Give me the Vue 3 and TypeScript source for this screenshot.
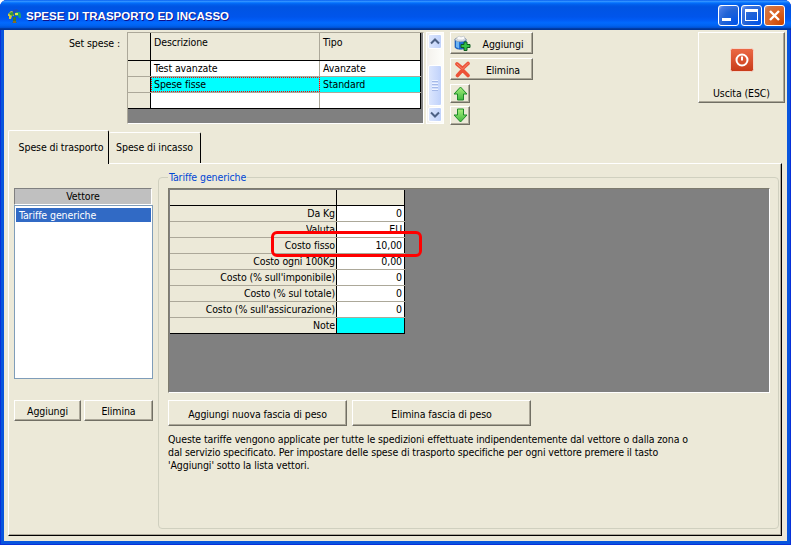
<script setup lang="ts">
interface FeeRow { label: string; value: string; clip?: boolean; note?: boolean }
const setRows = [
  { desc: 'Test avanzate', tipo: 'Avanzate', selected: false },
  { desc: 'Spese fisse', tipo: 'Standard', selected: true },
  { desc: '', tipo: '', selected: false },
]
const feeRows: FeeRow[] = [
  { label: 'Da Kg', value: '0' },
  { label: 'Valuta', value: 'EU', clip: true },
  { label: 'Costo fisso', value: '10,00' },
  { label: 'Costo ogni 100Kg', value: '0,00' },
  { label: "Costo (% sull'imponibile)", value: '0' },
  { label: 'Costo (% sul totale)', value: '0' },
  { label: "Costo (% sull'assicurazione)", value: '0' },
  { label: 'Note', value: '', note: true },
]
</script>

<template>
  <div class="window">
    <header class="titlebar">
      <svg class="app-icon" width="15" height="15" viewBox="0 0 15 15">
        <path d="M6 8 L9 8 L9 13 L10 14 L5 14 L6 13 Z" fill="#3d7a2a" />
        <path d="M6 12 L9 12 L9 14 L6 14 Z" fill="#8a6a28" />
        <path d="M1 5 L4 2 L7 3 L7 7 L5 7 L4 10 L2 10 L2 7 L1 7 Z" fill="#d8c83c" />
        <path d="M2 4 L5 3 L7 4 L6 7 L3 6 Z" fill="#2f9a3c" />
        <path d="M6 1 L10 0 L12 2 L9 3 L9 6 L7 7 L6 4 Z" fill="#1c50b8" />
        <path d="M9 3 L13 3 L14 6 L14 9 L12 9 L11 7 L8 7 Z" fill="#1fa070" />
        <path d="M8 4 L11 4 L11 6 L8 6 Z" fill="#e6e24a" />
      </svg>
      <span class="title">SPESE DI TRASPORTO ED INCASSO</span>
      <div class="controls">
        <button class="ctl"><i class="g-min"></i></button>
        <button class="ctl"><i class="g-max"></i></button>
        <button class="ctl close">
          <svg width="13" height="13" viewBox="0 0 13 13"><path d="M2 2 L11 11 M11 2 L2 11" stroke="#fff" stroke-width="2.4" /></svg>
        </button>
      </div>
    </header>

    <div class="client">
      <section class="top">
        <label class="set-label">Set spese :</label>
        <div class="set-grid">
          <div class="set-row head">
            <div class="c-fix"></div>
            <div class="c-desc">Descrizione</div>
            <div class="c-tipo">Tipo</div>
          </div>
          <div v-for="(r, i) in setRows" :key="i" class="set-row body" :class="{ sel: r.selected }">
            <div class="c-fix"></div>
            <div class="c-desc"><span>{{ r.desc }}</span></div>
            <div class="c-tipo">{{ r.tipo }}</div>
          </div>
        </div>

        <div class="scroll">
          <div class="sb-btn">
            <svg width="10" height="7" viewBox="0 0 10 7"><path d="M1 5.5 L5 1.5 L9 5.5" fill="none" stroke="#4d6185" stroke-width="2" /></svg>
          </div>
          <div class="sb-thumb"><i></i><i></i><i></i><i></i></div>
          <div class="sb-btn">
            <svg width="10" height="7" viewBox="0 0 10 7"><path d="M1 1.5 L5 5.5 L9 1.5" fill="none" stroke="#4d6185" stroke-width="2" /></svg>
          </div>
        </div>

        <div class="actions">
          <button class="btn icon-btn">
            <svg width="17" height="17" viewBox="0 0 17 17">
              <path d="M1 4 L1 12 C1 15 12 15 12 12 L12 4 Z" fill="#1f6fd6" stroke="#174a9a" stroke-width=".6" />
              <path d="M2 6 L2 12 L5 13.4 L5 6 Z" fill="#6db4f2" />
              <ellipse cx="6.5" cy="4.5" rx="5.5" ry="2.2" fill="#dfe4ea" stroke="#8c98a8" stroke-width=".7" />
              <path d="M2.5 3 L5 1 L7 2 L10 1 L11 3.5 L9 5 L4 5 Z" fill="#fafafa" stroke="#a6aeb8" stroke-width=".5" />
              <path d="M10 7 L13 7 L13 9.5 L16 9.5 L16 12.5 L13 12.5 L13 15.5 L10 15.5 L10 12.5 L7 12.5 L7 9.5 L10 9.5 Z" fill="#35c246" stroke="#0f5c22" stroke-width="1" />
            </svg>
            <span>Aggiungi</span>
          </button>
          <button class="btn icon-btn">
            <svg width="17" height="17" viewBox="0 0 17 17">
              <path d="M3 3 L8.5 7.5 L14 2.5 M3.5 14.5 L8.5 9 L14 14.5" fill="none" stroke="#ec5238" stroke-width="3.6" stroke-linecap="round" stroke-linejoin="round" />
              <path d="M3 3 L8.5 8 L14 2.5" fill="none" stroke="#f58a72" stroke-width="1" stroke-linecap="round" />
            </svg>
            <span>Elimina</span>
          </button>
          <button class="btn arrow">
            <svg width="15" height="15" viewBox="0 0 15 15">
              <defs><linearGradient id="gu" x1="0" y1="0" x2="0" y2="1"><stop offset="0" stop-color="#a8f07c" /><stop offset="1" stop-color="#3fb83f" /></linearGradient></defs>
              <path d="M7.5 1 L14 8 L10.5 8 L10.5 14 L4.5 14 L4.5 8 L1 8 Z" fill="url(#gu)" stroke="#1e8a2a" stroke-width="1" />
            </svg>
          </button>
          <button class="btn arrow">
            <svg width="15" height="15" viewBox="0 0 15 15">
              <defs><linearGradient id="gd" x1="0" y1="0" x2="0" y2="1"><stop offset="0" stop-color="#a8f07c" /><stop offset="1" stop-color="#3fb83f" /></linearGradient></defs>
              <path d="M4.5 1 L10.5 1 L10.5 7 L14 7 L7.5 14 L1 7 L4.5 7 Z" fill="url(#gd)" stroke="#1e8a2a" stroke-width="1" />
            </svg>
          </button>
        </div>

        <button class="btn exit">
          <svg width="24" height="24" viewBox="0 0 24 24">
            <defs><linearGradient id="ex" x1="0" y1="0" x2="0" y2="1"><stop offset="0" stop-color="#ec6a46" /><stop offset="1" stop-color="#c83a18" /></linearGradient></defs>
            <rect x=".5" y=".5" width="23" height="23" rx="2" fill="url(#ex)" stroke="#f4d8cc" />
            <circle cx="12" cy="12" r="5.5" fill="none" stroke="#fff" stroke-width="2" />
            <path d="M12 8.5 L12 12.5" stroke="#fff" stroke-width="2" />
          </svg>
          <span>Uscita (ESC)</span>
        </button>
      </section>

      <nav class="tabs">
        <div class="tab active">Spese di trasporto</div>
        <div class="tab">Spese di incasso</div>
      </nav>

      <section class="panel">
        <aside class="left">
          <div class="list-head">Vettore</div>
          <div class="list">
            <div class="list-item">Tariffe generiche</div>
          </div>
          <div class="left-btns">
            <button class="btn b-add">Aggiungi</button>
            <button class="btn b-del">Elimina</button>
          </div>
        </aside>

        <fieldset class="group">
          <legend>Tariffe generiche</legend>
          <div class="fee-grid">
            <div class="fee-table">
              <div class="fee-row head"><div class="f-l"></div><div class="f-v"></div></div>
              <div v-for="r in feeRows" :key="r.label" class="fee-row">
                <div class="f-l"><span :class="{ clip: r.clip }">{{ r.label }}</span></div>
                <div class="f-v" :class="{ note: r.note }"><span :class="{ clip: r.clip }">{{ r.value }}</span></div>
              </div>
            </div>
          </div>
          <div class="fee-btns">
            <button class="btn wide">Aggiungi nuova fascia di peso</button>
            <button class="btn wide">Elimina fascia di peso</button>
          </div>
          <p class="info">
            Queste tariffe vengono applicate per tutte le spedizioni effettuate indipendentemente dal vettore o dalla zona o<br />
            dal servizio specificato. Per impostare delle spese di trasporto specifiche per ogni vettore premere il tasto<br />
            'Aggiungi' sotto la lista vettori.
          </p>
        </fieldset>
      </section>
    </div>

    <div class="annotation"></div>
  </div>
</template>

<style scoped>
* { box-sizing: border-box; }
.window {
  position: relative;
  width: 791px;
  height: 545px;
  padding: 0 4px 4px;
  background: #0855dd;
  border-radius: 7px 7px 0 0;
  box-shadow: inset 1px 0 #0831d9, inset -1px 0 #0831d9, inset 0 -1px #0831d9;
  font: 10.5px "DejaVu Sans Condensed", "Liberation Sans", sans-serif;
  letter-spacing: -0.1px;
  color: #000;
  overflow: hidden;
}
.titlebar {
  display: flex;
  align-items: center;
  height: 30px;
  margin: 0 -4px;
  padding: 0 6px 0 7px;
  background: linear-gradient(180deg, #0058ee 0, #3593ff 4%, #288eff 6%, #127dff 8%, #036ffc 10%, #0262ee 14%, #0057e5 20%, #0054e3 24%, #0055eb 56%, #005bf5 66%, #026afe 76%, #0062ef 86%, #0052d6 92%, #0040ab 94%, #003092 100%);
}
.app-icon { margin-top: 2px; }
.title {
  margin-left: 4px;
  padding-top: 2px;
  color: #fff;
  font: bold 11.5px "Liberation Sans", sans-serif;
  letter-spacing: 0;
  text-shadow: 1px 1px #0f1089;
}
.controls { margin-left: auto; display: flex; gap: 2px; }
.ctl {
  width: 21px;
  height: 21px;
  padding: 0;
  display: flex;
  align-items: center;
  justify-content: center;
  border: 1px solid #fff;
  border-radius: 3px;
  background: radial-gradient(circle at 90% 90%, #0054e9 0%, #2263d5 55%, #4479e4 85%, #a3bbec 100%);
}
.ctl.close { background: radial-gradient(circle at 90% 90%, #cc4600 0%, #dc6527 55%, #cd7546 85%, #ffffff 130%); }
.g-min { width: 9px; height: 3px; background: #fff; margin: 9px 5px 0 0; }
.g-max { width: 13px; height: 12px; border: 1px solid #fff; border-top-width: 3px; }

.client {
  height: 511px;
  padding: 2px 2px 5px 0;
  background: #ece9d8;
}
.top { display: flex; height: 98px; }
.set-label { width: 123px; padding: 5px 7px 0 0; text-align: right; }
.set-grid {
  width: 297px;
  height: 92px;
  background: #808080;
  border: 1px solid;
  border-color: #aca899 #fff #fff #aca899;
}
.set-row { display: flex; width: 293px; background: #fff; border-bottom: 1px solid #000; }
.set-row.head { height: 28px; background: #ece9d8; padding: 0; }
.set-row.body { height: 16px; border-bottom: 1px solid #aca899; }
.set-row.body:nth-child(4) { height: 16px; border-bottom: 1px solid #000; }
.set-row.head > div { padding-top: 2px; }
.c-fix { width: 23px; flex: none; background: #ece9d8; border-right: 1px solid #000; }
.c-desc { width: 169px; flex: none; padding-left: 3px; border-right: 1px solid #aca899; line-height: 14px; }
.c-tipo { flex: 1; padding-left: 3px; line-height: 14px; border-right: 1px solid #000; }
.head .c-desc, .head .c-tipo { background: #ece9d8; }
.sel .c-desc { background: #0ff; outline: 1px dotted #f00; outline-offset: -1px; }
.sel .c-tipo { background: #0ff; }

.scroll {
  width: 18px;
  height: 92px;
  margin-left: 2px;
  padding: 2px;
  background: linear-gradient(90deg, #f3f1ec, #fefefb);
  box-shadow: inset 0 0 0 1px #fff;
  display: flex;
  flex-direction: column;
  justify-content: space-between;
  gap: 1px;
}
.sb-btn, .sb-thumb {
  border: 1px solid #fff;
  border-radius: 2px;
  background: linear-gradient(90deg, #dce6fd, #c0d2fb);
  display: flex;
  align-items: center;
  justify-content: center;
  flex-direction: column;
}
.sb-btn { height: 15px; }
.sb-thumb { height: 41px; margin-top: auto; gap: 1px; }
.sb-thumb i { width: 6px; height: 1px; background: #eef3ff; box-shadow: 0 1px #a5b9e8; margin-bottom: 1px; }

.actions { width: 83px; margin-left: 6px; display: flex; flex-direction: column; }
.btn {
  font: inherit;
  letter-spacing: inherit;
  color: #000;
  padding: 1px 0 0;
  background: #ece9d8;
  border: 1px solid;
  border-color: #fff #716f64 #716f64 #fff;
  box-shadow: inset -1px -1px #aca899;
  border-radius: 0;
}
.icon-btn { height: 22px; margin-bottom: 4px; padding: 0 0 0 3px; display: flex; align-items: center; }
.icon-btn span { flex: 1; padding: 1px 0 0 3px; text-align: center; }
.arrow { width: 20px; height: 19px; margin-bottom: 3px; padding: 0; display: flex; align-items: center; justify-content: center; }

.exit {
  width: 87px;
  height: 71px;
  margin-left: auto;
  display: flex;
  flex-direction: column;
  align-items: center;
  padding-top: 15px;
}
.exit span { margin-top: 15px; }

.tabs { display: flex; height: 33px; margin-left: 5px; align-items: flex-end; position: relative; z-index: 1; }
.tab {
  height: 31px;
  width: 92px;
  text-align: center;
  line-height: 29px;
  border-top: 1px solid #fff;
  border-right: 1px solid #000;
  border-radius: 2px 2px 0 0;
}
.tab.active {
  width: 101px;
  height: 34px;
  margin-bottom: -1px;
  margin-left: -1px;
  padding-left: 5px;
  line-height: 32px;
  background: #ece9d8;
  border-left: 1px solid #fff;
}
.panel {
  display: flex;
  width: 774px;
  height: 373px;
  margin-left: 4px;
  padding-left: 5px;
  border: 1px solid;
  border-color: #fff #000 #000 #fff;
  box-shadow: inset -1px -1px #aca899;
}
.left { width: 139px; margin-top: 24px; }
.list-head {
  height: 17px;
  width: 138px;
  text-align: center;
  line-height: 15px;
  background: #c0c0c0;
  border: 1px solid;
  border-color: #808080 #fff #fff #808080;
}
.list {
  height: 174px;
  padding: 2px 1px;
  background: #fff;
  border: 1px solid #7f9db9;
}
.list-item {
  height: 14px;
  padding-left: 3px;
  line-height: 14px;
  color: #fff;
  background: #316ac5;
}
.left-btns { display: flex; gap: 3px; margin-top: 21px; }
.b-add { width: 67px; height: 21px; }
.b-del { width: 69px; height: 21px; }

.group {
  width: 621px;
  height: 359px;
  margin: 6px 0 0 5px;
  padding: 4px 0 0 9px;
  border: 1px solid #d0d0bf;
  border-radius: 4px;
  min-width: 0;
}
legend {
  margin-left: 0;
  padding: 0 1px;
  color: #0046d5;
  line-height: 14px;
}
.fee-grid {
  width: 602px;
  height: 205px;
  padding: 1px 0 0 1px;
  background: #808080;
  border: 1px solid;
  border-color: #7d7b6e #fff #fff #7d7b6e;
}
.fee-table { width: 235px; border-bottom: 1px solid #000; background: #ece9d8; }
.fee-row { display: flex; height: 16px; border-bottom: 1px solid #aca899; }
.fee-row.head { height: 16px; border-bottom: 1px solid #000; }
.fee-row:last-child { height: 15px; border-bottom: 0; }
.f-l {
  width: 167px;
  padding-right: 1px;
  text-align: right;
  line-height: 15px;
  border-right: 1px solid #000;
  background: #ece9d8;
}
.f-v {
  flex: 1;
  padding-right: 2px;
  text-align: right;
  line-height: 15px;
  background: #fff;
  border-right: 1px solid #000;
}
.head .f-v { background: #ece9d8; }
.f-v.note { background: #0ff; }
.clip { display: inline-block; height: 11px; overflow: hidden; vertical-align: top; }
.fee-btns { display: flex; gap: 5px; margin-top: 7px; }
.wide { width: 179px; height: 26px; }
.info { margin: 7px 0 0; line-height: 13px; white-space: nowrap; }

.annotation {
  position: absolute;
  left: 271px;
  top: 231px;
  width: 151px;
  height: 26px;
  border: 3px solid #f00;
  border-radius: 6px;
  pointer-events: none;
}
</style>

<style>
html, body { background: #fff; margin: 0; }
</style>
